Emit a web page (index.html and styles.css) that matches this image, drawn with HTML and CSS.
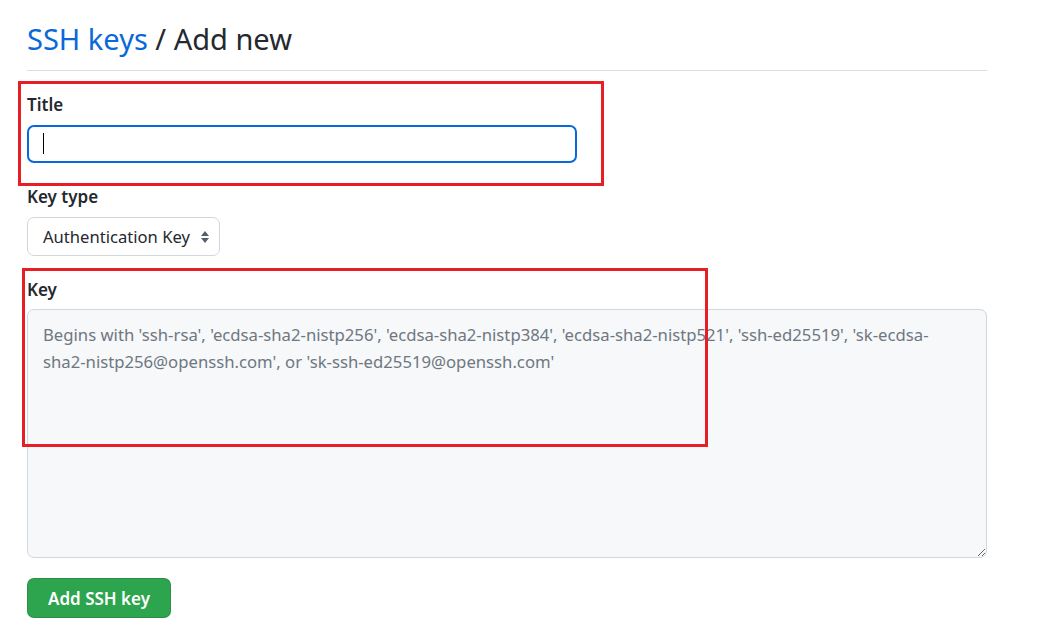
FILE: index.html
```html
<!DOCTYPE html>
<html lang="en">
<head>
<meta charset="utf-8">
<title>SSH keys / Add new</title>
<link rel="stylesheet" href="styles.css">
</head>
<body>
<main class="page">
  <h1 class="subhead"><a class="crumb" href="#">SSH keys</a> / Add new</h1>
  <form class="form">
    <div class="group">
      <label class="label" for="title">Title</label>
      <div class="input-wrap">
        <input id="title" class="input focused" type="text">
        <span class="caret"></span>
      </div>
      <span class="annot annot-title"></span>
    </div>
    <div class="group">
      <label class="label" for="type">Key type</label>
      <div class="select">
        <span>Authentication Key</span>
        <svg class="updown" width="10" height="16" viewBox="0 0 10 16"><path d="M5 2 L9 7 H1 Z M5 14 L9 9 H1 Z" fill="#57606a"/></svg>
      </div>
    </div>
    <div class="group">
      <label class="label label-key" for="key">Key</label>
      <textarea id="key" class="textarea" placeholder="Begins with 'ssh-rsa', 'ecdsa-sha2-nistp256', 'ecdsa-sha2-nistp384', 'ecdsa-sha2-nistp521', 'ssh-ed25519', 'sk-ecdsa-sha2-nistp256@openssh.com', or 'sk-ssh-ed25519@openssh.com'"></textarea>
      <span class="annot annot-key"></span>
    </div>
    <button type="button" class="btn">Add SSH key</button>
  </form>
</main>
</body>
</html>
```

FILE: styles.css
```css
* { box-sizing: border-box; }
html, body { margin: 0; background: #fff; }
body {
  font-family: "Noto Sans", "Open Sans", sans-serif;
  color: #24292f;
}
.page {
  width: 960px;
  margin-left: 27px;
  padding-top: 19px;
}
.subhead {
  margin: 0;
  font-size: 29px;
  font-weight: 400;
  line-height: 40px;
  padding-bottom: 11px;
  border-bottom: 1px solid #d8dee4;
  color: #24292f;
}
.crumb { color: #0969da; text-decoration: none; }
.form { display: flex; flex-direction: column; align-items: flex-start; padding-top: 22px; }
.group { position: relative; width: 100%; margin-bottom: 22px; }
.label {
  display: block;
  font-size: 17px;
  font-weight: 600;
  line-height: 24px;
  margin-bottom: 8px;
}
.label-key { margin-bottom: 7px; }
.input-wrap { position: relative; width: 550px; }
.input {
  display: block;
  width: 550px;
  height: 38px;
  border: 2px solid #0969da;
  border-radius: 7px;
  outline: none;
  background: #fff;
  font: inherit;
}
.caret {
  position: absolute;
  left: 16px;
  top: 8px;
  width: 1px;
  height: 21px;
  background: #000;
}
.select {
  display: inline-flex;
  align-items: center;
  gap: 10px;
  height: 39px;
  padding: 0 9px 0 15px;
  border: 1px solid #d0d7de;
  border-radius: 7px;
  font-size: 16.6px;
  color: #24292f;
}
.textarea {
  display: block;
  width: 960px;
  height: 249px;
  resize: vertical;
  border: 1px solid #d0d7de;
  border-radius: 7px;
  background: #f6f8fa;
  padding: 11px 15px;
  font: inherit;
  font-size: 16.7px;
  line-height: 27px;
  color: #24292f;
}
.textarea::placeholder { color: #6e7781; }
.btn {
  margin-top: -2px;
  height: 40px;
  padding: 0 20px;
  border: 1px solid rgba(27,31,36,0.15);
  border-radius: 7px;
  background: #2da44e;
  color: #fff;
  font: inherit;
  font-size: 17px;
  font-weight: 600;
}
.annot {
  position: absolute;
  border: 3px solid #e81e25;
  pointer-events: none;
}
.annot-title { left: -9px; top: -12px; width: 586px; height: 105px; }
.annot-key { left: -5px; top: -10px; width: 686px; height: 179px; }
```
